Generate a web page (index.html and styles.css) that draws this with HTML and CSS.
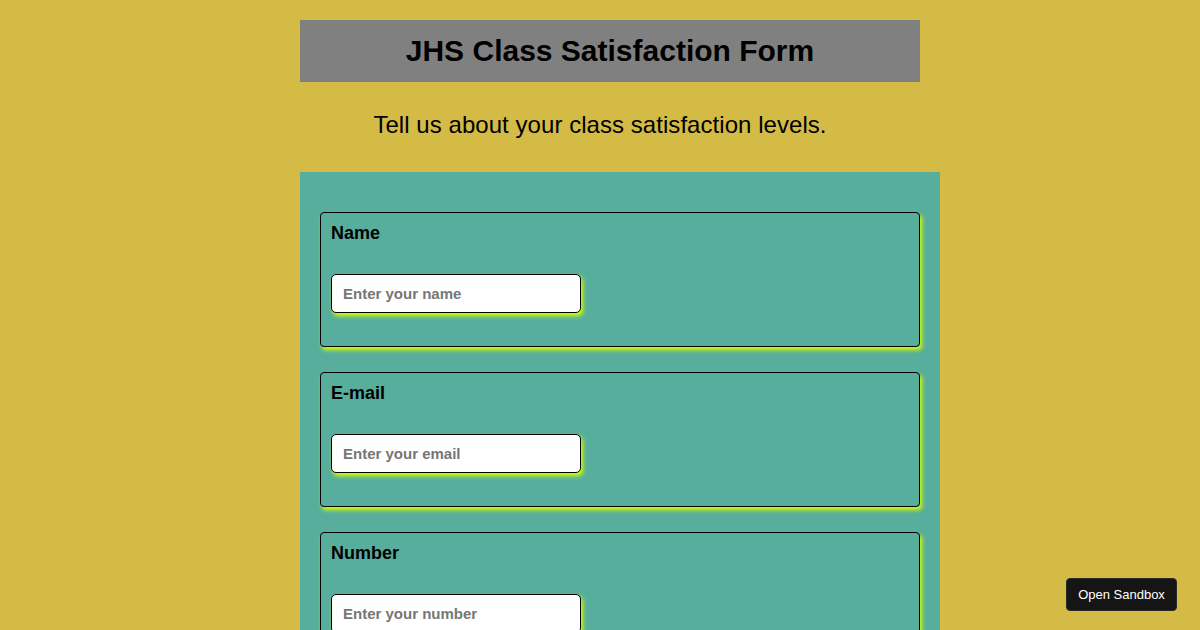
FILE: index.html
```html
<!DOCTYPE html>
<html>
<head>
<meta charset="utf-8">
<link rel="stylesheet" href="styles.css">
</head>
<body>
<div class="page">
  <h1 class="title">JHS Class Satisfaction Form</h1>
  <p class="subtitle">Tell us about your class satisfaction levels.</p>
  <form class="form">
    <div class="card">
      <label class="label">Name</label>
      <input class="field" type="text" placeholder="Enter your name">
    </div>
    <div class="card">
      <label class="label">E-mail</label>
      <input class="field" type="text" placeholder="Enter your email">
    </div>
    <div class="card">
      <label class="label">Number</label>
      <input class="field" type="text" placeholder="Enter your number">
    </div>
  </form>
</div>
<button class="sandbox">Open Sandbox</button>
</body>
</html>
```

FILE: styles.css
```css
html, body {
  margin: 0;
  padding: 0;
  background: #d4bb45;
  font-family: "Liberation Sans", Arial, sans-serif;
  overflow: hidden;
}
.page {
  margin-left: 300px;
  width: 600px;
  padding-top: 20px;
}
.title {
  margin: 0;
  width: 620px;
  height: 62px;
  box-sizing: border-box;
  background: #808080;
  color: #000;
  font-size: 30px;
  font-weight: bold;
  text-align: center;
  line-height: 62px;
}
.subtitle {
  margin: 0;
  height: 90px;
  line-height: 86px;
  text-align: center;
  font-size: 24px;
  letter-spacing: 0.05px;
  color: #000;
}
.form {
  width: 640px;
  box-sizing: border-box;
  background: #57ae9c;
  padding: 40px 20px 20px;
  display: flex;
  flex-direction: column;
  gap: 25px;
}
.card {
  height: 135px;
  box-sizing: border-box;
  border: 1px solid #000;
  border-radius: 4px;
  box-shadow: 2px 3px 4px #d4ff00;
  padding: 9px 10px;
  display: flex;
  flex-direction: column;
  align-items: flex-start;
}
.label {
  font-size: 18px;
  font-weight: bold;
  line-height: 22px;
  color: #000;
}
.field {
  margin-top: 30px;
  width: 250px;
  height: 39px;
  box-sizing: border-box;
  border: 1px solid #000;
  border-radius: 5px;
  background: #fff;
  box-shadow: 2px 3px 4px #d4ff00;
  padding: 0 11px;
  font-family: "Liberation Sans", Arial, sans-serif;
  font-size: 15px;
  font-weight: bold;
  outline: none;
}
.field::placeholder {
  color: #767676;
}
.sandbox {
  position: fixed;
  right: 23px;
  bottom: 19px;
  width: 111px;
  height: 33px;
  background: #151515;
  color: #fff;
  border: 1px solid #2a2a2a;
  border-radius: 4px;
  font-family: "Liberation Sans", Arial, sans-serif;
  font-size: 13px;
  padding: 0;
}
```
